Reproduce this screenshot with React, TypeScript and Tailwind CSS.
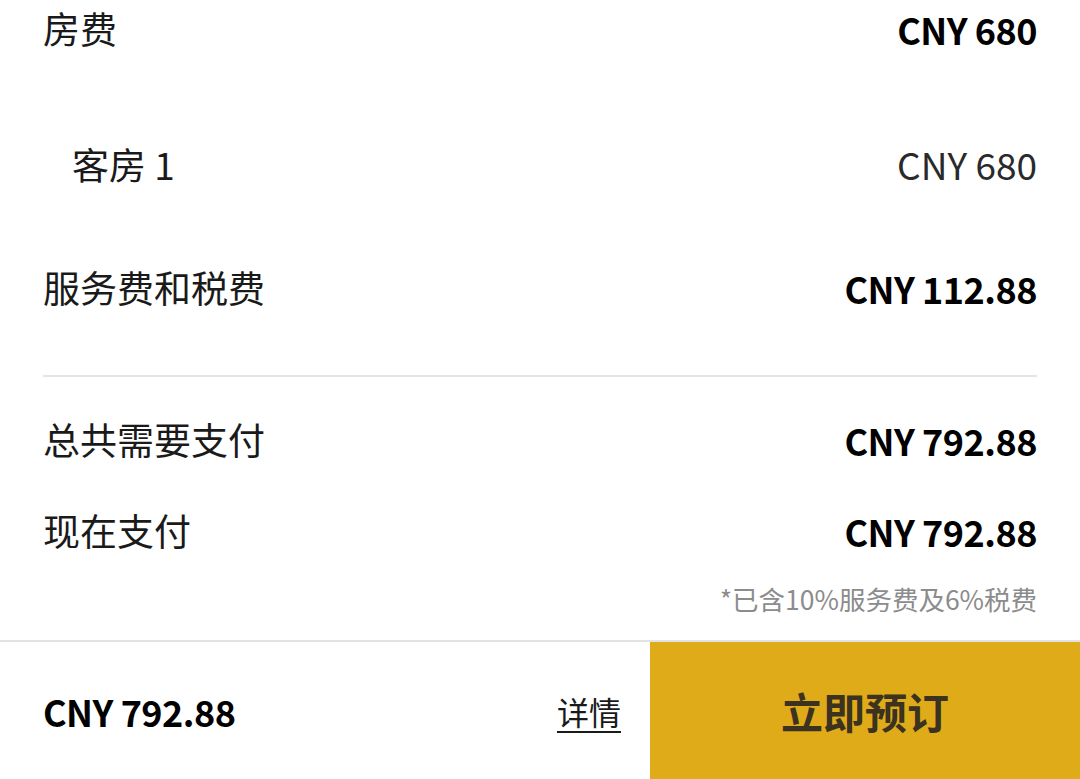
import React from 'react';

const font = { fontFamily: '"Noto Sans CJK SC", "Noto Sans", sans-serif' };

function Row({ label, amount, bold = true, indent = false, className = '' }: { label: string; amount: string; bold?: boolean; indent?: boolean; className?: string }) {
  return (
    <div className={`flex items-center justify-between ${className}`}>
      <span className={`text-[37px] text-[#1a1a1a] ${indent ? 'pl-[29px]' : ''}`}>{label}</span>
      <span className={bold ? 'text-[36px] tracking-[-0.5px] font-bold text-black' : 'text-[37px] font-normal text-[#2a2a2a]'}>{amount}</span>
    </div>
  );
}

export default function App() {
  return (
    <div className="w-[1080px] h-[779px] flex flex-col bg-white overflow-hidden" style={font}>
      {/* Price breakdown */}
      <div className="flex-1 flex flex-col px-[43px]">
        <Row label="房费" amount="CNY 680" className="h-[58px]" />
        <Row label="客房 1" amount="CNY 680" bold={false} indent className="h-[72px] mt-[71px]" />
        <Row label="服务费和税费" amount="CNY 112.88" className="h-[72px] mt-[51px]" />
        <div className="h-[2px] bg-[#e4e4e4] mt-[51px]" />
        <Row label="总共需要支付" amount="CNY 792.88" className="h-[64px] mt-[31px]" />
        <Row label="现在支付" amount="CNY 792.88" className="h-[64px] mt-[27px]" />
        <div className="flex justify-end items-center h-[40px] mt-[16px]">
          <span className="text-[26.5px] text-[#8c8c8c]">*已含10%服务费及6%税费</span>
        </div>
      </div>

      {/* Bottom bar */}
      <div className="h-[139px] flex border-t-2 border-[#e2e2e2]">
        <div className="flex-1 flex items-center justify-between pl-[43px] pr-[29px]">
          <span className="text-[36px] font-bold text-black tracking-[-0.5px]">CNY 792.88</span>
          <span className="text-[32px] text-[#1a1a1a] underline underline-offset-[6px] decoration-2">详情</span>
        </div>
        <button className="w-[430px] bg-[#e0ab18] flex items-center justify-center">
          <span className="text-[42px] font-bold text-[#3b3220]">立即预订</span>
        </button>
      </div>
    </div>
  );
}
